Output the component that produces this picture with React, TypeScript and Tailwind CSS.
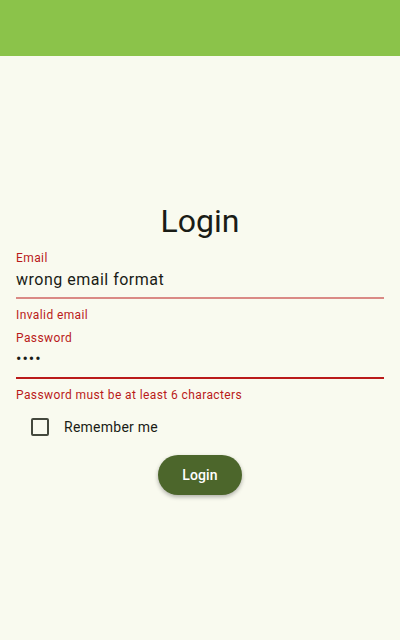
import React from 'react';

export default function App() {
  return (
    <div className="w-[400px] h-[640px] bg-[#f9faef] font-['Roboto',sans-serif] text-[#1a1c16] overflow-hidden">
      <div className="h-14 bg-[#8bc34a]" />
      <div className="px-4 pt-[145px] flex flex-col">
        <h1 className="h-10 text-[32px] leading-10 text-center font-normal">Login</h1>

        <label className="mt-[9px] h-4 text-xs leading-4 tracking-[0.4px] text-[#ba1a1a]">Email</label>
        <div className="mt-[2px] h-6 text-base leading-6 tracking-[0.5px]">wrong email format</div>
        <div className="mt-[5px] h-[2px] bg-[#da8a85]" />
        <div className="mt-2 h-4 text-xs leading-4 tracking-[0.4px] text-[#ba1a1a]">Invalid email</div>

        <label className="mt-[7px] h-4 text-xs leading-4 tracking-[0.4px] text-[#ba1a1a]">Password</label>
        <div className="mt-[1px] h-6 text-base leading-6 tracking-[1px]">••••</div>
        <div className="mt-[6px] h-[2px] bg-[#ba1a1a]" />
        <div className="mt-[8px] h-4 text-xs leading-4 tracking-[0.4px] text-[#ba1a1a]">
          Password must be at least 6 characters
        </div>

        <div className="mt-[15px] h-[18px] flex items-center pl-[15px]">
          <div className="w-[18px] h-[18px] border-2 border-[#44483d] rounded-[2px]" />
          <span className="ml-[15px] text-sm leading-5 tracking-[0.25px]">Remember me</span>
        </div>

        <div className="mt-[19px] flex justify-center">
          <button className="w-[84px] h-10 rounded-full bg-[#4c662b] text-white text-sm font-medium tracking-[0.1px] shadow-[0_2px_4px_rgba(0,0,0,0.3)]">
            Login
          </button>
        </div>
      </div>
    </div>
  );
}
